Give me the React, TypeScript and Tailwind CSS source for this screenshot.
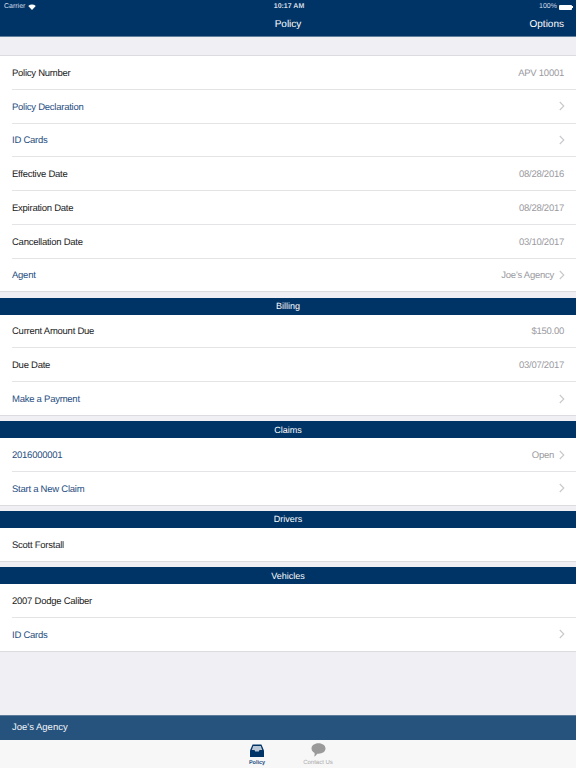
import React from "react";

function Chevron() {
  return (
    <svg width="6" height="10" viewBox="0 0 6 10" className="ml-[5px] -mr-[1px] shrink-0" fill="none">
      <path d="M0.8 1 L4.8 5 L0.8 9" stroke="#c7c7cc" strokeWidth="1.1" />
    </svg>
  );
}

type RowProps = { label: string; value?: string; link?: boolean; chevron?: boolean };

function Row({ label, value, link, chevron }: RowProps) {
  return (
    <div className="h-[32.75px] flex items-center pr-3">
      <span className={"flex-1 pt-[3px] text-[9.5px] tracking-[-0.25px] " + (link ? "text-[#1f4e7f]" : "text-[#222222]")}>
        {label}
      </span>
      {value && <span className="pt-[3px] text-[9.5px] tracking-[-0.25px] text-[#9a9a9f]">{value}</span>}
      {chevron && <Chevron />}
    </div>
  );
}

function Group({ rows }: { rows: RowProps[] }) {
  return (
    <div className="bg-white border-b border-[#dcdce0] pl-3">
      {rows.map((r, i) => (
        <div key={i} className={i ? "border-t border-[#e4e4e6]" : ""}>
          <Row {...r} />
        </div>
      ))}
    </div>
  );
}

function Header({ t }: { t: string }) {
  return (
    <div className="bg-[#003366] h-[17px] mt-[5.4px] pt-[1px] flex items-center justify-center text-white text-[9px]">{t}</div>
  );
}

function Wifi() {
  return (
    <svg width="8" height="6" viewBox="0 0 16 12" fill="white" className="ml-[3px]">
      <path d="M8 12 L0.5 4 A11 11 0 0 1 15.5 4 Z" />
    </svg>
  );
}

function Battery() {
  return (
    <span className="flex items-center ml-[2px]">
      <span className="w-[13px] h-[5px] bg-white rounded-[1px]" />
      <span className="w-[1px] h-[2px] bg-white" />
    </span>
  );
}

function InboxIcon() {
  return (
    <svg width="14" height="13" viewBox="0 0 14 13" fill="none">
      <path d="M2.6 0.5 H11.4 L14 6.5 V13 H0 V6.5 Z" fill="#003366" />
      <path d="M3.2 2 H10.8 L12.2 6 H9.5 L8.8 7.5 H5.2 L4.5 6 H1.8 Z" fill="#b9c6d6" />
    </svg>
  );
}

function ChatIcon() {
  return (
    <svg width="15" height="14" viewBox="0 0 15 14" fill="#9a9a9a">
      <path d="M7.5 0.3 C11.6 0.3 14.5 2.6 14.5 5.6 C14.5 8.6 11.6 10.8 7.5 10.8 C7 10.8 6.6 10.8 6.2 10.7 C5.4 12 4.2 13.2 3.2 13.6 C3.6 12.4 3.8 11 3.6 10 C1.6 9.1 0.5 7.5 0.5 5.6 C0.5 2.6 3.4 0.3 7.5 0.3 Z" />
    </svg>
  );
}

export default function App() {
  return (
    <div
      className="w-[576px] h-[768px] flex flex-col bg-[#efeff4] overflow-hidden [text-rendering:geometricPrecision]"
      style={{ fontFamily: "'Liberation Sans', Arial, sans-serif" }}
    >
      <div className="bg-[#003366] h-[37px] shrink-0 text-white border-b border-[#5f7f9f]">
        <div className="h-[13px] pt-[1px] flex items-center justify-between pl-1 pr-[3px] text-[7px] text-[#d5dde6]">
          <span className="flex items-center w-[80px]">Carrier<Wifi /></span>
          <span className="font-semibold pl-[1px]">10:17 AM</span>
          <span className="flex items-center justify-end w-[80px]">100%<Battery /></span>
        </div>
        <div className="h-[23px] flex items-center justify-between px-3 text-[10px]">
          <span className="w-[60px]" />
          <span>Policy</span>
          <span className="w-[60px] text-right">Options</span>
        </div>
      </div>
      <div className="flex-1">
        <div className="h-[19px] border-b border-[#dcdce0]" />
        <Group
          rows={[
            { label: "Policy Number", value: "APV 10001" },
            { label: "Policy Declaration", link: true, chevron: true },
            { label: "ID Cards", link: true, chevron: true },
            { label: "Effective Date", value: "08/28/2016" },
            { label: "Expiration Date", value: "08/28/2017" },
            { label: "Cancellation Date", value: "03/10/2017" },
            { label: "Agent", link: true, value: "Joe's Agency", chevron: true },
          ]}
        />
        <Header t="Billing" />
        <Group
          rows={[
            { label: "Current Amount Due", value: "$150.00" },
            { label: "Due Date", value: "03/07/2017" },
            { label: "Make a Payment", link: true, chevron: true },
          ]}
        />
        <Header t="Claims" />
        <Group
          rows={[
            { label: "2016000001", link: true, value: "Open", chevron: true },
            { label: "Start a New Claim", link: true, chevron: true },
          ]}
        />
        <Header t="Drivers" />
        <Group rows={[{ label: "Scott Forstall" }]} />
        <Header t="Vehicles" />
        <Group
          rows={[
            { label: "2007 Dodge Caliber" },
            { label: "ID Cards", link: true, chevron: true },
          ]}
        />
      </div>
      <div className="h-[25px] pt-[1px] bg-[#26527e] border-t border-[#5c7c9c] text-[#f2f5f8] text-[9.5px] flex items-center px-3 shrink-0">
        Joe's Agency
      </div>
      <div className="h-[28px] bg-[#f7f7f7] flex justify-center gap-[31px] shrink-0 pr-[1px]">
        <div className="flex flex-col items-center w-[30px] pt-[3.5px] gap-[2px]">
          <InboxIcon />
          <span className="text-[5.5px] text-[#1f4e7f] font-bold">Policy</span>
        </div>
        <div className="flex flex-col items-center w-[30px] pt-[3px] gap-[2px]">
          <ChatIcon />
          <span className="text-[6px] text-[#aaaaaa] whitespace-nowrap">Contact Us</span>
        </div>
      </div>
    </div>
  );
}
